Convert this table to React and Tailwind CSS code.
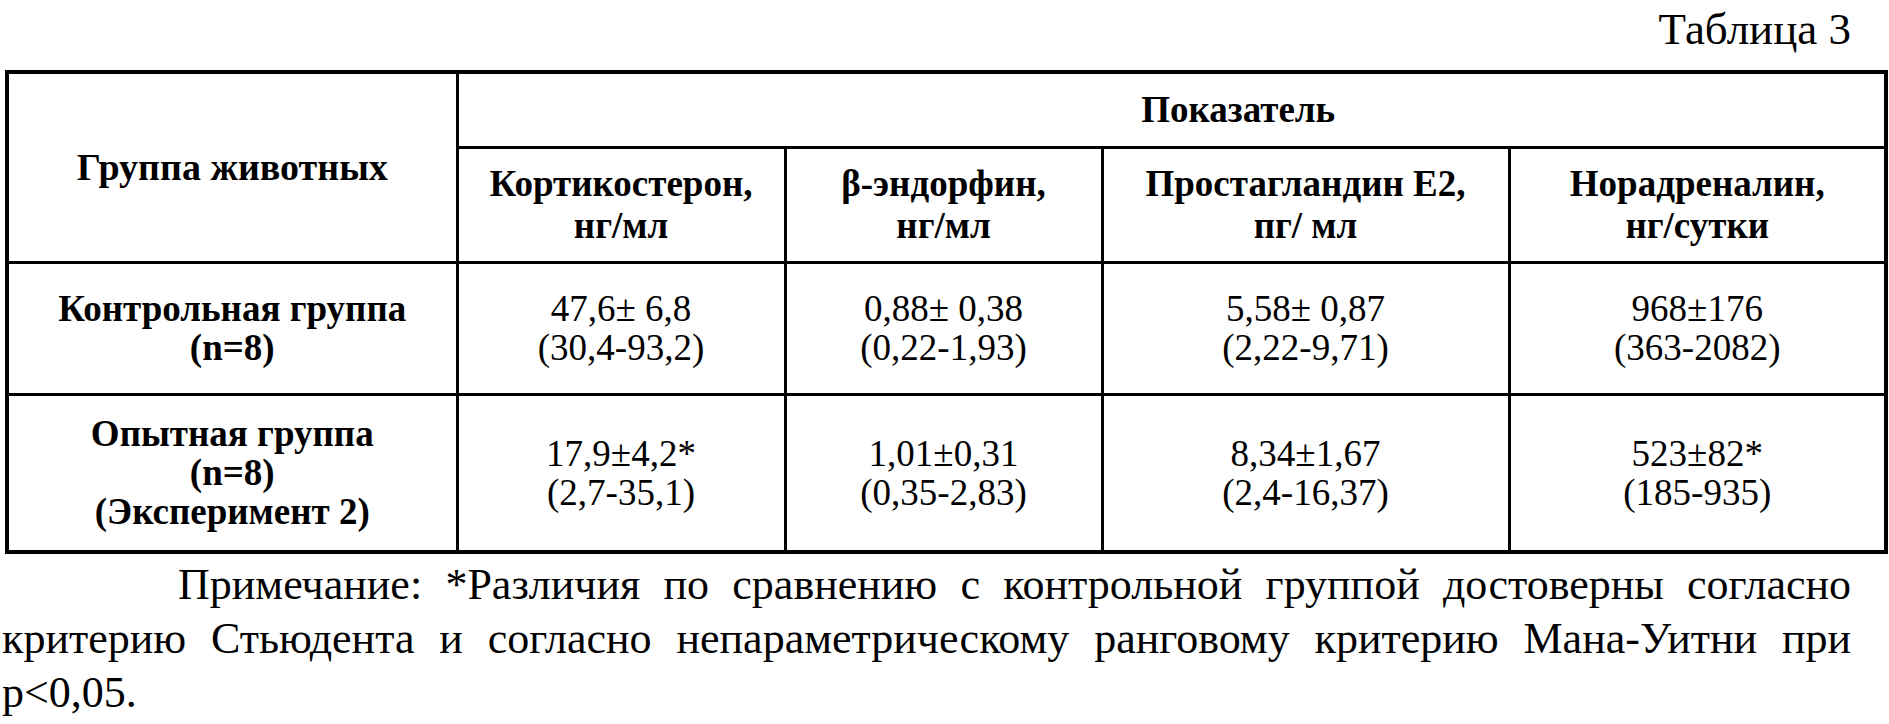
const HEAD = [
  ['Кортикостерон,', 'нг/мл'],
  ['β-эндорфин,', 'нг/мл'],
  ['Простагландин Е2,', 'пг/ мл'],
  ['Норадреналин,', 'нг/сутки'],
];

const ROWS = [
  {
    group: ['Контрольная группа', '(n=8)'],
    values: [
      ['47,6± 6,8', '(30,4-93,2)'],
      ['0,88± 0,38', '(0,22-1,93)'],
      ['5,58± 0,87', '(2,22-9,71)'],
      ['968±176', '(363-2082)'],
    ],
    h: 'h-[132px]',
  },
  {
    group: ['Опытная группа', '(n=8)', '(Эксперимент 2)'],
    values: [
      ['17,9±4,2*', '(2,7-35,1)'],
      ['1,01±0,31', '(0,35-2,83)'],
      ['8,34±1,67', '(2,4-16,37)'],
      ['523±82*', '(185-935)'],
    ],
    h: 'h-[158px]',
  },
];

function Lines({ lines }) {
  return lines.map((l, i) => (
    <div key={i}>{l}</div>
  ));
}

export default function App() {
  return (
    <div className="w-[1889px] h-[724px] overflow-hidden bg-white text-black font-['Liberation_Serif',serif]">
      <div className="h-[70px] flex justify-end items-start pr-[38px] pt-[2px] text-[45px] leading-[54px]">
        Таблица 3
      </div>

      <table className="ml-[5px] w-[1879px] table-fixed border-collapse border-[4px] border-black">
        <colgroup>
          <col className="w-[450px]" />
          <col className="w-[328px]" />
          <col className="w-[317px]" />
          <col className="w-[407px]" />
          <col className="w-[377px]" />
        </colgroup>
        <thead>
          <tr className="h-[75px]">
            <th rowSpan={2} className="border-[3px] border-black text-[38px] leading-[42px] font-bold text-center align-middle">
              Группа животных
            </th>
            <th colSpan={4} className="border-[3px] border-black pl-[134px] text-[37px] leading-[42px] font-bold text-center align-middle">
              Показатель
            </th>
          </tr>
          <tr className="h-[115px]">
            {HEAD.map((h, i) => (
              <th key={i} className="border-[3px] border-black text-[37px] leading-[42px] font-bold text-center align-middle">
                <Lines lines={h} />
              </th>
            ))}
          </tr>
        </thead>
        <tbody>
          {ROWS.map((r, i) => (
            <tr key={i} className={r.h}>
              <td className="border-[3px] border-black text-[37px] leading-[39px] font-bold text-center align-middle">
                <Lines lines={r.group} />
              </td>
              {r.values.map((v, j) => (
                <td key={j} className="border-[3px] border-black text-[37px] leading-[39px] text-center align-middle">
                  <Lines lines={v} />
                </td>
              ))}
            </tr>
          ))}
        </tbody>
      </table>

      <div className="pl-[2px] pr-[38px] pt-[4px] text-[44px] leading-[54px] whitespace-nowrap">
        <div className="pl-[176px] text-justify [text-align-last:justify]">
          Примечание: *Различия по сравнению с контрольной группой достоверны согласно
        </div>
        <div className="text-justify [text-align-last:justify]">
          критерию Стьюдента и согласно непараметрическому ранговому критерию Мана-Уитни при
        </div>
        <div>p&lt;0,05.</div>
      </div>
    </div>
  );
}
